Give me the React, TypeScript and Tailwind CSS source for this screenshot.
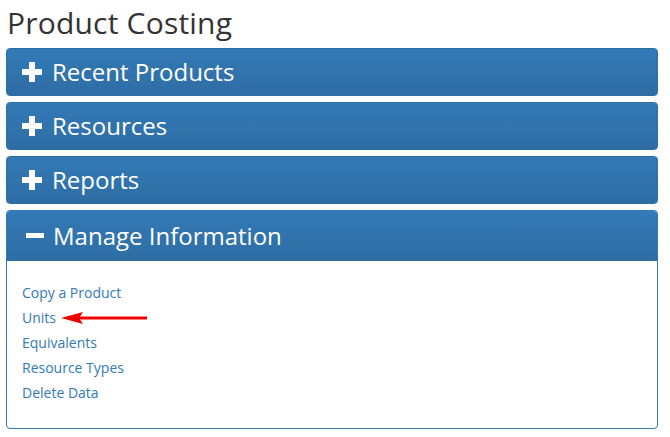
import React from "react";

const closedPanels = ["Recent Products", "Resources", "Reports"];
const links = ["Copy a Product", "Units", "Equivalents", "Resource Types", "Delete Data"];

function PlusIcon() {
  return (
    <svg width="20" height="20" viewBox="0 0 20 20" className="shrink-0">
      <rect x="7" y="0" width="6" height="20" fill="white" />
      <rect x="0" y="7" width="20" height="6" fill="white" />
    </svg>
  );
}

function MinusIcon() {
  return (
    <svg width="22" height="20" viewBox="0 0 22 20" className="shrink-0">
      <rect x="4" y="7" width="18" height="5" fill="white" />
    </svg>
  );
}

function Arrow() {
  return (
    <svg width="90" height="16" viewBox="0 0 90 16" className="absolute left-[37px] top-[5px]">
      <polygon points="2,8 24,2 20,8 24,14" fill="#ee0000" />
      <rect x="19" y="6.5" width="69" height="3" fill="#ee0000" />
    </svg>
  );
}

export default function App() {
  return (
    <div className="w-[670px] h-[437px] bg-white px-[6px] pt-[3px]" style={{ fontFamily: '"Open Sans", sans-serif' }}>
      <h1 className="text-[30px] leading-[39px] text-[#333] pl-[1px] mb-[6px] tracking-[0.2px]">Product Costing</h1>
      <div className="w-[652px] flex flex-col gap-[6px]">
        {closedPanels.map((title) => (
          <div key={title} className="h-[48px] rounded-[4px] border border-[#2e6da4] bg-gradient-to-b from-[#337ab7] to-[#2e6da4] flex items-center gap-[10px] pl-[15px]">
            <PlusIcon />
            <span className="text-[24px] text-white">{title}</span>
          </div>
        ))}
        <div className="rounded-[4px] border border-[#337ab7] overflow-hidden">
          <div className="h-[50px] bg-gradient-to-b from-[#337ab7] to-[#2e6da4] flex items-center gap-[9px] pl-[15px]">
            <MinusIcon />
            <span className="text-[24px] text-white">Manage Information</span>
          </div>
          <div className="pt-[19px] pb-[23px] pl-[15px] flex flex-col">
            {links.map((l) => (
              <div key={l} className="relative h-[25px] leading-[25px]">
                <a className="text-[14px] text-[#337ab7]">{l}</a>
                {l === "Units" && <Arrow />}
              </div>
            ))}
          </div>
        </div>
      </div>
    </div>
  );
}
